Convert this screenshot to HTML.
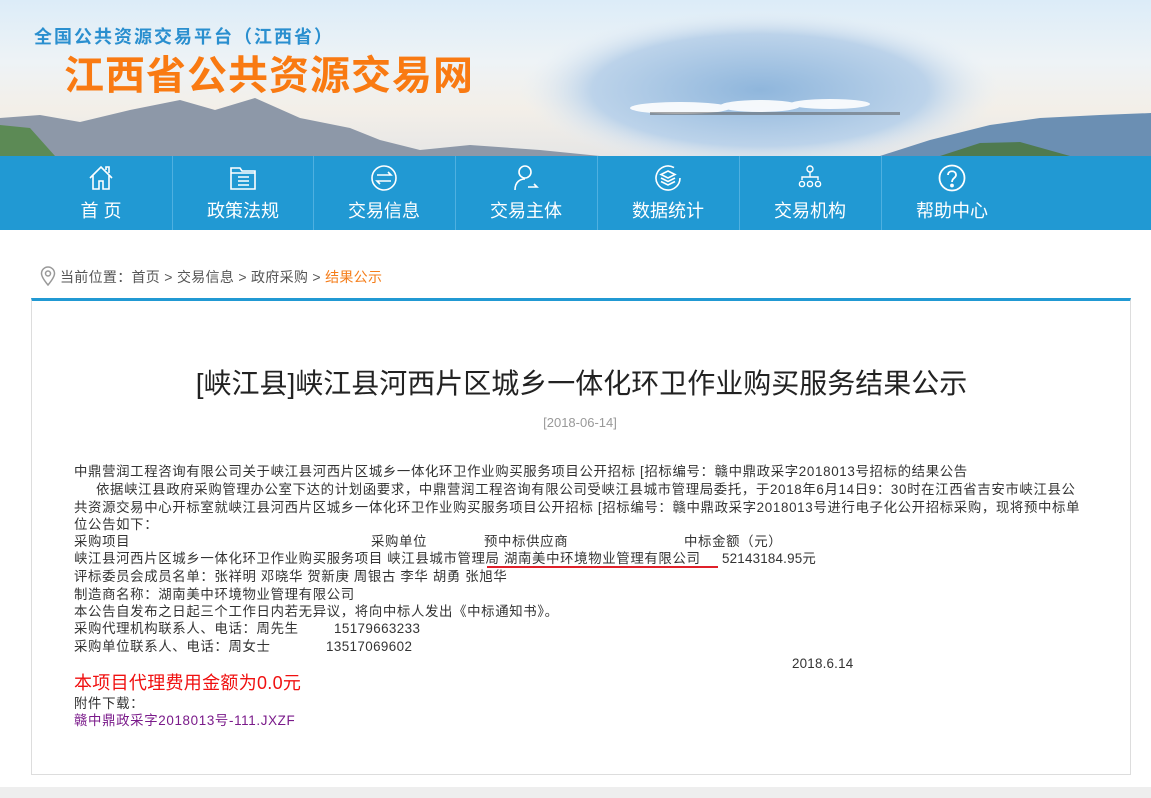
<!DOCTYPE html>
<html><head><meta charset="utf-8">
<style>
*{margin:0;padding:0;box-sizing:border-box}
body{width:1151px;height:798px;overflow:hidden;background:#fff;font-family:"Liberation Sans","Noto Sans CJK SC",sans-serif;position:relative}
.banner{position:absolute;left:0;top:0;width:1151px;height:156px;overflow:hidden;
background:linear-gradient(180deg,#dcecf8 0%,#eef3f6 40%,#f3efe8 70%,#e6e6e6 100%)}
.nav{position:absolute;left:0;top:156px;width:1151px;height:74px;background:#2199d3}
.ni{position:absolute;top:0;width:142px;height:74px;color:#fff;text-align:center}
.ni .lb{position:absolute;left:0;right:0;top:44px;font-size:18px;line-height:22px}
.ni svg{position:absolute;left:57px;top:8px}
.sep{position:absolute;top:0;width:1px;height:74px;background:#4fb0e0}
.t{position:absolute;white-space:nowrap;font-size:13.4px;color:#333;line-height:17px;letter-spacing:0.65px}
</style></head><body>
<div class="banner">
<svg width="1151" height="156" style="position:absolute;left:0;top:0">
<defs><radialGradient id="sk" cx="0.5" cy="0.5" r="0.5"><stop offset="0" stop-color="#8fb6dc"/><stop offset="0.7" stop-color="#bcd3ea"/><stop offset="1" stop-color="#e6eef5" stop-opacity="0"/></radialGradient></defs>
<ellipse cx="760" cy="90" rx="240" ry="80" fill="url(#sk)"/>
<path d="M0 118 L40 115 L80 122 L130 110 L180 100 L215 110 L255 98 L300 118 L350 128 L380 140 L420 150 L470 145 L540 150 L600 156 L0 156Z" fill="#8d98a8"/>
<path d="M0 125 L30 128 L55 156 L0 156Z" fill="#5c8a55"/>
<path d="M880 156 L930 140 L990 125 L1040 118 L1100 115 L1151 113 L1151 156Z" fill="#6b8fb3"/>
<path d="M940 156 L980 143 L1020 142 L1070 156Z" fill="#4f7a4f"/>
<g fill="#fff" opacity="0.9">
<ellipse cx="680" cy="108" rx="50" ry="6"/><ellipse cx="760" cy="106" rx="40" ry="6"/><ellipse cx="830" cy="104" rx="40" ry="5"/>
</g>
<g fill="#555" opacity="0.5"><rect x="650" y="112" width="250" height="3"/></g>
</svg>
<div style="position:absolute;left:34px;top:23px;font-size:18px;font-weight:bold;color:#2a8fcf;letter-spacing:2px">全国公共资源交易平台（江西省）</div>
<div style="position:absolute;left:64px;top:52px;font-size:40px;font-weight:bold;color:#f97a12;letter-spacing:1px;line-height:48px">江西省公共资源交易网</div>
</div>
<div class="nav">
<div class="ni" style="left:30px"><svg width="28" height="28" viewBox="0 0 28 28" fill="none" stroke="#fff" stroke-width="1.6"><path d="M3 14 L14 3 L25 14 M6 11 V25 H12 V17 H16 V25 H22 V11 M19 6 V3 H22 V9"/></svg><div class="lb">首 页</div></div>
<div class="sep" style="left:172px"></div>
<div class="ni" style="left:172px"><svg width="28" height="28" viewBox="0 0 28 28" fill="none" stroke="#fff" stroke-width="1.6"><path d="M2 4 H11 L13 7 H26 V25 H2 Z M2 9 H26 M9 13 H20 M9 17 H20 M9 21 H20"/></svg><div class="lb">政策法规</div></div>
<div class="sep" style="left:313px"></div>
<div class="ni" style="left:313px"><svg width="28" height="28" viewBox="0 0 28 28" fill="none" stroke="#fff" stroke-width="1.6"><circle cx="14" cy="14" r="12"/><path d="M7 11 H21 L18 8 M21 17 H7 L10 20"/></svg><div class="lb">交易信息</div></div>
<div class="sep" style="left:455px"></div>
<div class="ni" style="left:455px"><svg width="28" height="28" viewBox="0 0 28 28" fill="none" stroke="#fff" stroke-width="1.6"><circle cx="13" cy="8" r="6"/><path d="M3 26 C3 18 8 15 13 15 M16 23 H25 L22 20"/></svg><div class="lb">交易主体</div></div>
<div class="sep" style="left:597px"></div>
<div class="ni" style="left:597px"><svg width="28" height="28" viewBox="0 0 28 28" fill="none" stroke="#fff" stroke-width="1.6"><path d="M26 14 A12 12 0 1 1 20 3.6"/><path d="M14 7 L21 10.5 L14 14 L7 10.5 Z M7 14 L14 17.5 L21 14 M7 17.5 L14 21 L21 17.5"/></svg><div class="lb">数据统计</div></div>
<div class="sep" style="left:739px"></div>
<div class="ni" style="left:739px"><svg width="28" height="28" viewBox="0 0 28 28" fill="none" stroke="#fff" stroke-width="1.4"><circle cx="14" cy="5" r="3"/><path d="M14 8 V13 M6 16 V13 H22 V16"/><circle cx="6" cy="20" r="2.6"/><circle cx="14" cy="20" r="2.6"/><circle cx="22" cy="20" r="2.6"/></svg><div class="lb">交易机构</div></div>
<div class="sep" style="left:881px"></div>
<div class="ni" style="left:881px"><svg width="28" height="28" viewBox="0 0 28 28" fill="none" stroke="#fff" stroke-width="1.8"><circle cx="14" cy="14" r="12.5"/><path d="M10 11 C10 6 18 6 18 11 C18 14 14 14 14 18"/><circle cx="14" cy="21.5" r="1" fill="#fff"/></svg><div class="lb">帮助中心</div></div>
</div>

<svg width="16" height="20" viewBox="0 0 16 20" style="position:absolute;left:40px;top:266px" fill="none" stroke="#999" stroke-width="1.5"><path d="M8 19 C3 13 1.5 10 1.5 7.5 A6.5 6.5 0 0 1 14.5 7.5 C14.5 10 13 13 8 19Z"/><circle cx="8" cy="7.5" r="2.5"/></svg>
<div style="position:absolute;left:60px;top:267px;font-size:14px;color:#555;white-space:nowrap;letter-spacing:0.3px">当前位置：首页 &gt; 交易信息 &gt; 政府采购 &gt; <span style="color:#f57d1a">结果公示</span></div>

<div style="position:absolute;left:31px;top:298px;width:1100px;height:477px;border:1px solid #ddd;border-top:3px solid #2199d3"></div>

<div style="position:absolute;left:0;width:1163px;top:365px;text-align:center;font-size:28px;color:#222;line-height:38px">[峡江县]峡江县河西片区城乡一体化环卫作业购买服务结果公示</div>
<div style="position:absolute;left:0;width:1160px;top:415px;text-align:center;font-size:13px;color:#999">[2018-06-14]</div>

<div class="t" style="left:74px;top:463px">中鼎营润工程咨询有限公司关于峡江县河西片区城乡一体化环卫作业购买服务项目公开招标 [招标编号：赣中鼎政采字2018013号招标的结果公告</div>
<div class="t" style="left:96px;top:481px">依据峡江县政府采购管理办公室下达的计划函要求，中鼎营润工程咨询有限公司受峡江县城市管理局委托，于2018年6月14日9：30时在江西省吉安市峡江县公</div>
<div class="t" style="left:74px;top:499px">共资源交易中心开标室就峡江县河西片区城乡一体化环卫作业购买服务项目公开招标 [招标编号：赣中鼎政采字2018013号进行电子化公开招标采购，现将预中标单</div>
<div class="t" style="left:74px;top:516px">位公告如下：</div>
<div class="t" style="left:74px;top:533px">采购项目</div>
<div class="t" style="left:371px;top:533px">采购单位</div>
<div class="t" style="left:484px;top:533px">预中标供应商</div>
<div class="t" style="left:684px;top:533px">中标金额（元）</div>
<div class="t" style="left:74px;top:550px">峡江县河西片区城乡一体化环卫作业购买服务项目 峡江县城市管理局 湖南美中环境物业管理有限公司</div>
<div class="t" style="left:722px;top:550px;letter-spacing:0.2px">52143184.95元</div>
<div style="position:absolute;left:487px;top:566px;width:231px;height:2px;background:#e0202a"></div>
<div class="t" style="left:74px;top:568px">评标委员会成员名单：张祥明 邓晓华 贺新庚 周银古 李华 胡勇 张旭华</div>
<div class="t" style="left:74px;top:586px">制造商名称：湖南美中环境物业管理有限公司</div>
<div class="t" style="left:74px;top:603px">本公告自发布之日起三个工作日内若无异议，将向中标人发出《中标通知书》。</div>
<div class="t" style="left:74px;top:620px">采购代理机构联系人、电话：周先生</div>
<div class="t" style="left:334px;top:620px;letter-spacing:0.4px">15179663233</div>
<div class="t" style="left:74px;top:638px">采购单位联系人、电话：周女士</div>
<div class="t" style="left:326px;top:638px;letter-spacing:0.4px">13517069602</div>
<div class="t" style="left:792px;top:655px;letter-spacing:0.2px">2018.6.14</div>
<div class="t" style="left:74px;top:672px;font-size:18px;line-height:22px;color:#f01010;letter-spacing:0.3px">本项目代理费用金额为0.0元</div>
<div class="t" style="left:74px;top:695px">附件下载：</div>
<div class="t" style="left:74px;top:712px;color:#7a1a8a">赣中鼎政采字2018013号-111.JXZF</div>

<div style="position:absolute;left:0;top:787px;width:1151px;height:11px;background:#eee"></div>
</body></html>
